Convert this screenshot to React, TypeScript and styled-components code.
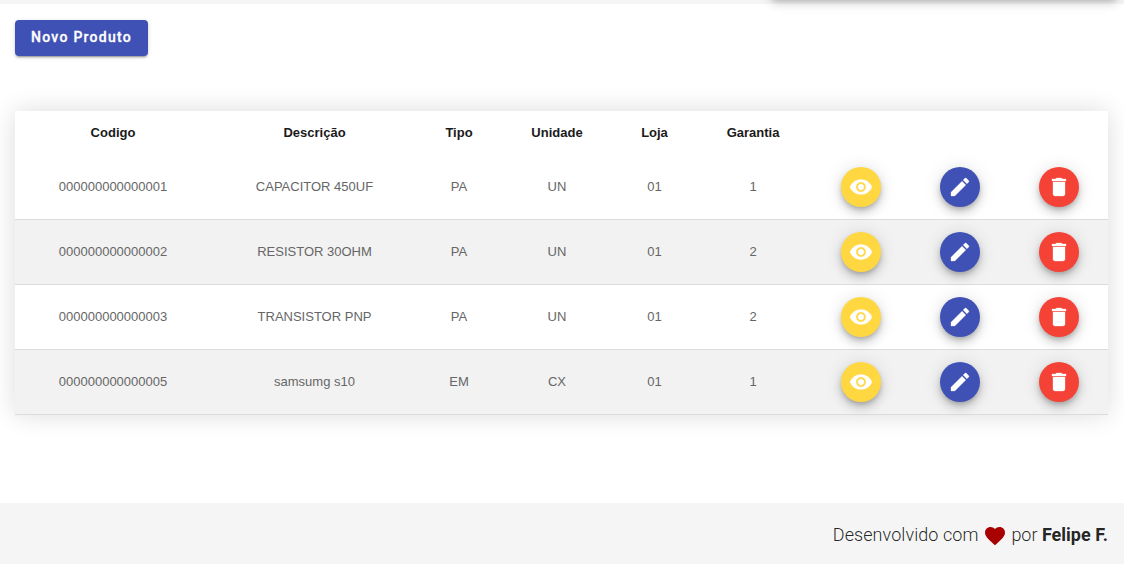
import React from 'react';
import styled, { createGlobalStyle } from 'styled-components';

const GlobalStyle = createGlobalStyle`
  * { box-sizing: border-box; }
  body { margin: 0; background: #fff; overflow: hidden; }
`;

const Page = styled.div`
  position: relative;
  display: flex;
  flex-direction: column;
  height: 564px;
  font-family: Roboto, 'Liberation Sans', sans-serif;
  color: rgba(0, 0, 0, 0.87);
  overflow: hidden;
`;

const HeaderStrip = styled.div`
  height: 4px;
  flex: none;
  background: #f5f5f5;
`;

const FloatingCard = styled.div`
  position: absolute;
  top: -60px;
  left: 771px;
  width: 346px;
  height: 57px;
  border-radius: 4px;
  box-shadow: 0 3px 5px -1px rgba(0, 0, 0, 0.2), 0 6px 10px 0 rgba(0, 0, 0, 0.14),
    0 1px 18px 0 rgba(0, 0, 0, 0.12);
`;

const Content = styled.main`
  flex: 1;
  padding: 16px 16px 0 15px;
`;

const PrimaryButton = styled.button`
  display: block;
  width: 133px;
  height: 36px;
  padding: 0 0 2px;
  border: 0;
  border-radius: 4px;
  background: #3f51b5;
  color: #fff;
  font: 500 14px/34px Roboto, sans-serif;
  letter-spacing: 1.25px;
  -webkit-text-stroke: 0.3px #fff;
  box-shadow: 0 3px 1px -2px rgba(0, 0, 0, 0.2), 0 2px 2px 0 rgba(0, 0, 0, 0.14),
    0 1px 5px 0 rgba(0, 0, 0, 0.12);
`;

const Table = styled.table`
  width: 1093px;
  margin-top: 55px;
  table-layout: fixed;
  border-collapse: separate;
  border-spacing: 0;
  background: #fff;
  font: 13px/20px 'Liberation Sans', Arial, sans-serif;
  box-shadow: 0 0 24px rgba(0, 0, 0, 0.14);
`;

const Column = styled.col<{ $width: number }>`
  width: ${({ $width }) => $width}px;
`;

const HeadCell = styled.th`
  height: 44px;
  padding: 0 0 1px;
  text-align: center;
  font-weight: 700;
  color: #1a1a1a;
`;

const Row = styled.tr`
  height: 65px;
  &:nth-child(even) { background: #f2f2f2; }
`;

const Cell = styled.td`
  padding: 0 0 1px;
  text-align: center;
  vertical-align: middle;
  color: #666;
  border-bottom: 1px solid #dcdcdc;
`;

const ActionCell = styled(Cell)`
  padding: 0;
`;

const RoundButton = styled.button<{ $color: string }>`
  display: flex;
  align-items: center;
  justify-content: center;
  width: 40px;
  height: 40px;
  margin: 0 auto;
  padding: 0;
  border: 0;
  border-radius: 50%;
  background: ${({ $color }) => $color};
  box-shadow: 0 3px 5px -1px rgba(0, 0, 0, 0.2), 0 6px 10px 0 rgba(0, 0, 0, 0.14),
    0 1px 18px 0 rgba(0, 0, 0, 0.12);
`;

const Icon = styled.svg<{ $color?: string }>`
  display: block;
  width: 24px;
  height: 24px;
  flex: none;
  fill: ${({ $color }) => $color ?? '#fff'};
  stroke: ${({ $color }) => ($color ? 'none' : '#fff')};
  stroke-width: 0.3;
`;

const Footer = styled.footer`
  display: flex;
  align-items: center;
  justify-content: flex-end;
  height: 61px;
  flex: none;
  padding: 3px 16px 0 0;
  background: #f5f5f5;
  font-size: 18px;
  font-weight: 300;
  line-height: 24px;
  white-space: pre;
`;

const Credit = styled.span`
  letter-spacing: 0.07px;
`;

const Author = styled.strong`
  font-weight: 700;
`;

const HeartIcon = styled(Icon)`
  margin: 2px 0.5px 0 4px;
`;

const eye =
  'M12 4.5C7 4.5 2.73 7.61 1 12c1.73 4.39 6 7.5 11 7.5s9.27-3.11 11-7.5c-1.73-4.39-6-7.5-11-7.5zM12 17c-2.76 0-5-2.24-5-5s2.24-5 5-5 5 2.24 5 5-2.24 5-5 5zm0-8c-1.66 0-3 1.34-3 3s1.34 3 3 3 3-1.34 3-3-1.34-3-3-3z';
const pencil =
  'M3 17.25V21h3.75L17.81 9.94l-3.75-3.75L3 17.25zM20.71 7.04c.39-.39.39-1.02 0-1.41l-2.34-2.34c-.39-.39-1.02-.39-1.41 0l-1.83 1.83 3.75 3.75 1.83-1.83z';
const trash = 'M6 19c0 1.1.9 2 2 2h8c1.1 0 2-.9 2-2V7H6v12zM19 4h-3.5l-1-1h-5l-1 1H5v2h14V4z';
const heart =
  'M12 21.35l-1.45-1.32C5.4 15.36 2 12.28 2 8.5 2 5.42 4.42 3 7.5 3c1.74 0 3.41.81 4.5 2.09C13.09 3.81 14.76 3 16.5 3 19.58 3 22 5.42 22 8.5c0 3.78-3.4 6.86-8.55 11.54L12 21.35z';

const actions = [
  { label: 'Visualizar', color: '#ffd740', path: eye },
  { label: 'Editar', color: '#3f51b5', path: pencil },
  { label: 'Excluir', color: '#f44336', path: trash },
];

const widths = [196, 207, 82, 114, 81, 116, 100, 98, 99];
const headings = ['Codigo', 'Descrição', 'Tipo', 'Unidade', 'Loja', 'Garantia', '', '', ''];
const products = [
  ['000000000000001', 'CAPACITOR 450UF', 'PA', 'UN', '01', '1'],
  ['000000000000002', 'RESISTOR 30OHM', 'PA', 'UN', '01', '2'],
  ['000000000000003', 'TRANSISTOR PNP', 'PA', 'UN', '01', '2'],
  ['000000000000005', 'samsumg s10', 'EM', 'CX', '01', '1'],
];

export default function App() {
  return (
    <Page>
      <GlobalStyle />
      <HeaderStrip />
      <FloatingCard />
      <Content>
        <PrimaryButton>Novo Produto</PrimaryButton>
        <Table>
          <colgroup>
            {widths.map((width, i) => (
              <Column key={i} $width={width} />
            ))}
          </colgroup>
          <thead>
            <tr>
              {headings.map((heading, i) => (
                <HeadCell key={i}>{heading}</HeadCell>
              ))}
            </tr>
          </thead>
          <tbody>
            {products.map((product) => (
              <Row key={product[0]}>
                {product.map((value, i) => (
                  <Cell key={i}>{value}</Cell>
                ))}
                {actions.map((action) => (
                  <ActionCell key={action.label}>
                    <RoundButton $color={action.color} aria-label={action.label}>
                      <Icon viewBox="0 0 24 24">
                        <path d={action.path} />
                      </Icon>
                    </RoundButton>
                  </ActionCell>
                ))}
              </Row>
            ))}
          </tbody>
        </Table>
      </Content>
      <Footer>
        <Credit>Desenvolvido com</Credit>
        <HeartIcon viewBox="0 0 24 24" $color="#a80000">
          <path d={heart} />
        </HeartIcon>
        <span> por <Author>Felipe F.</Author></span>
      </Footer>
    </Page>
  );
}
